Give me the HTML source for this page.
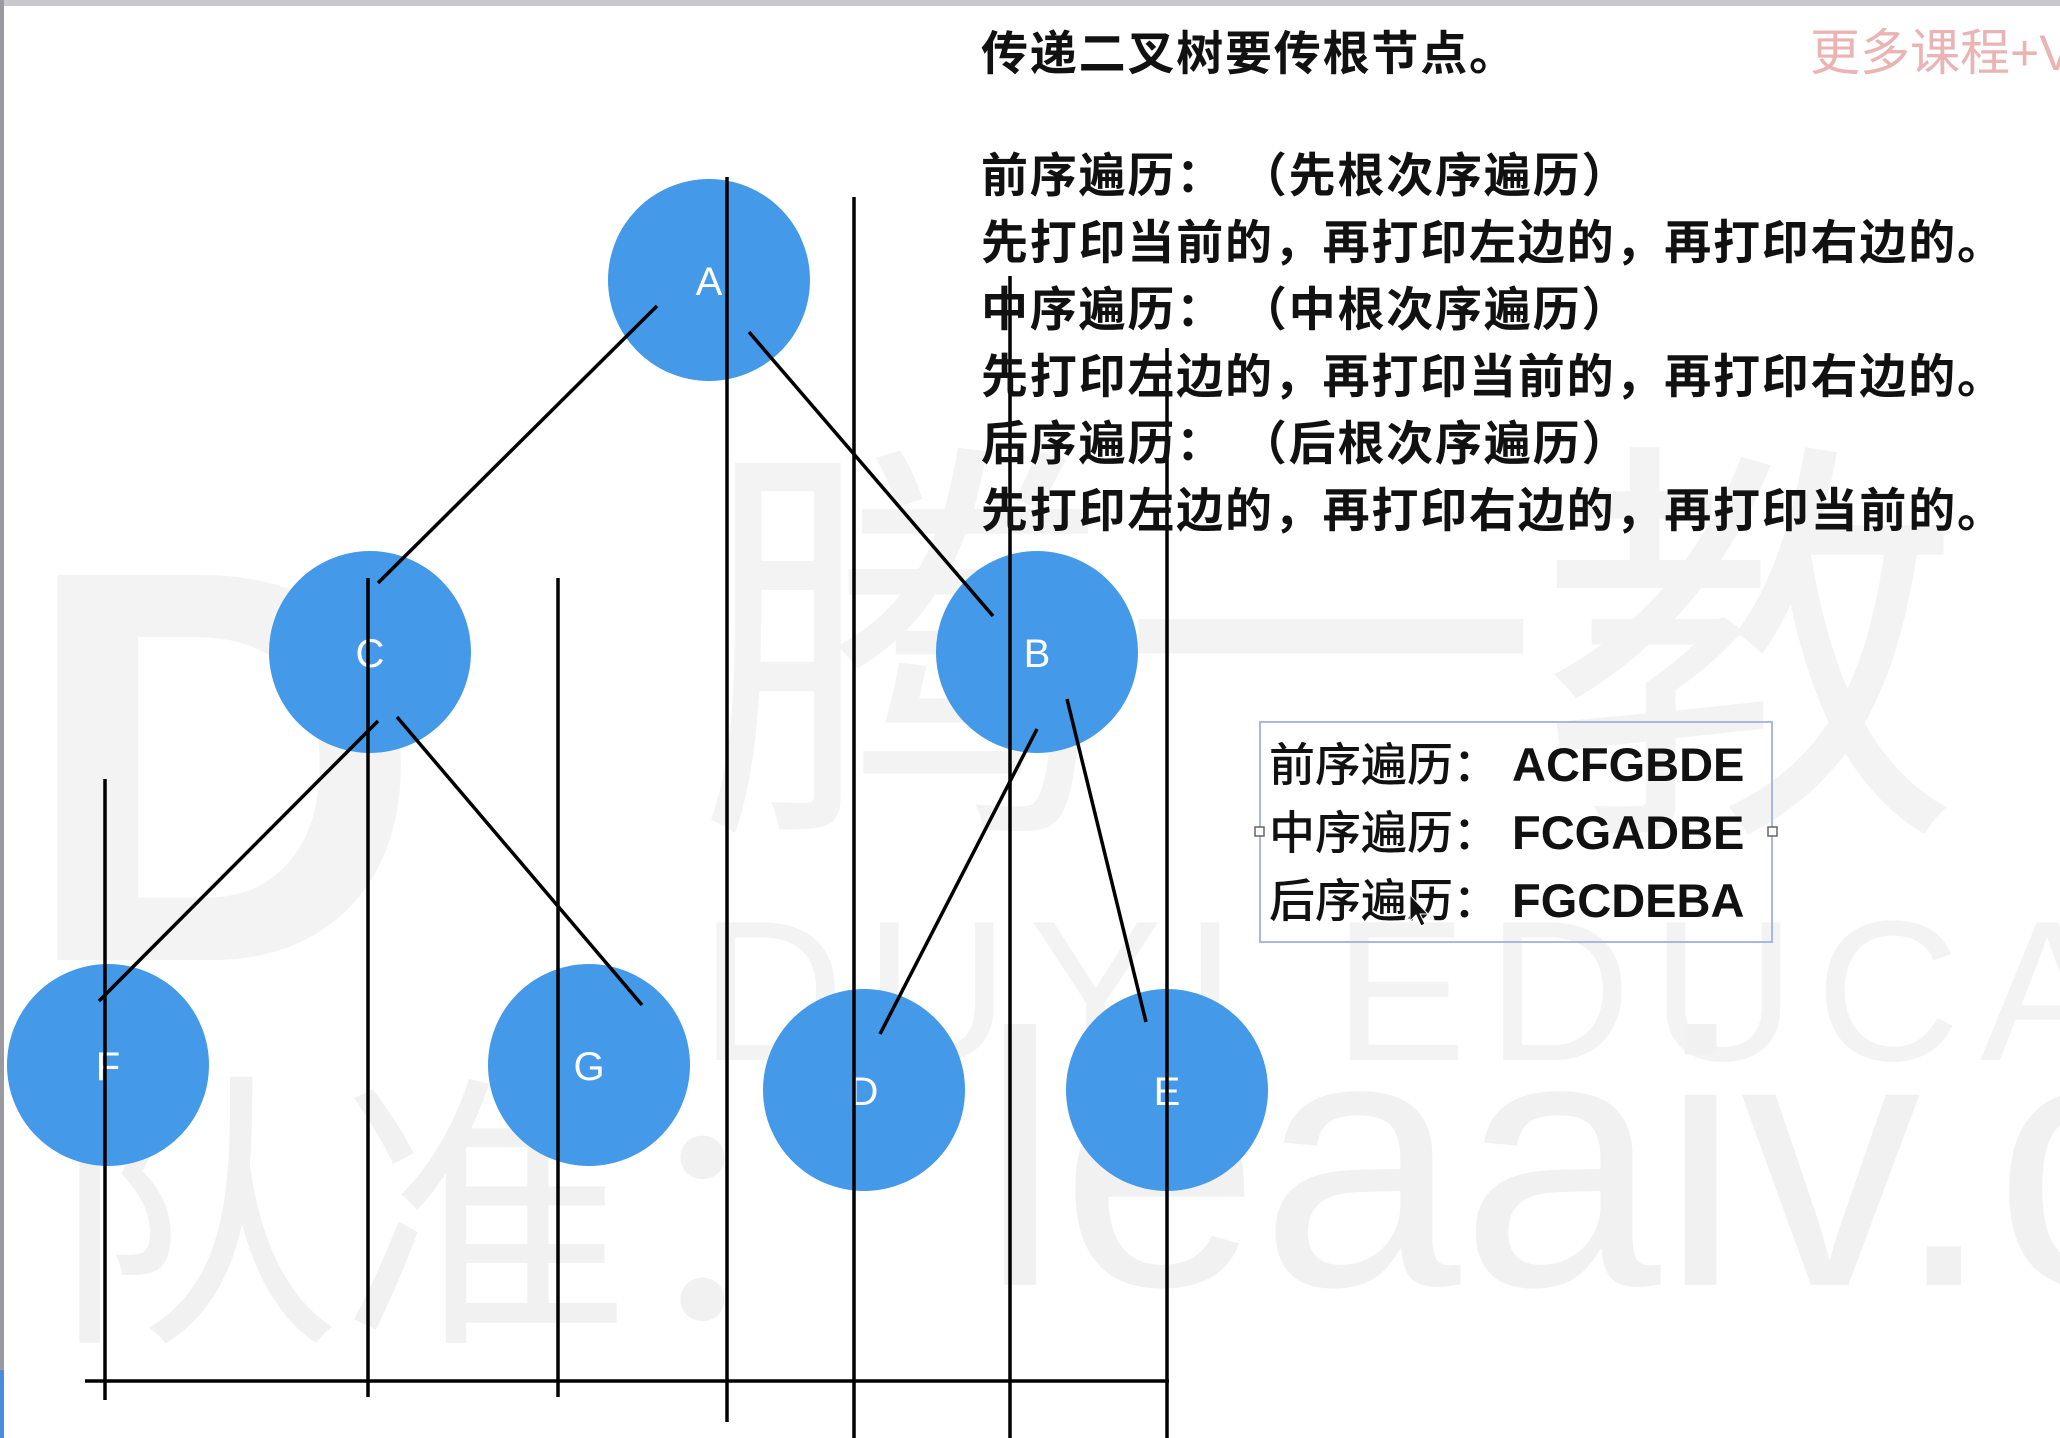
<!DOCTYPE html>
<html><head><meta charset="utf-8"><style>
html,body{margin:0;padding:0;background:#fff;width:2060px;height:1438px;overflow:hidden}
svg{position:absolute;left:0;top:0}
</style></head><body>
<svg width="2060" height="1438" viewBox="0 0 2060 1438" xmlns="http://www.w3.org/2000/svg">
<rect x="0" y="0" width="2060" height="6" fill="#c9c9cd"/>
<rect x="0" y="0" width="4" height="1438" fill="#9a9aa0"/>
<rect x="0" y="1370" width="4" height="68" fill="#4a8be0"/>
<!-- watermark -->
<g font-family="Liberation Sans, 'Noto Sans CJK SC', sans-serif">
<text x="20" y="960" font-size="560" font-weight="bold" fill="#f3f3f3">D</text>
<text x="700" y="800" font-size="420" font-family="'Noto Sans CJK SC',sans-serif" fill="#f3f3f3">腾一教</text>
<text x="700" y="1060" font-size="200" fill="#f3f3f3" letter-spacing="20">DUYI EDUCAT</text>
<text x="50" y="1320" font-size="290" font-family="'Noto Sans CJK SC',sans-serif" fill="#f1f1f1">队准：</text>
<text x="980" y="1285" font-size="360" fill="#f1f1f1">leaaiv.c</text>
</g>
<!-- circles -->
<g fill="#4499e8">
<circle cx="709" cy="280" r="101"/>
<circle cx="370" cy="652" r="101"/>
<circle cx="1037" cy="652" r="101"/>
<circle cx="108" cy="1065" r="101"/>
<circle cx="589" cy="1065" r="101"/>
<circle cx="864" cy="1090" r="101"/>
<circle cx="1167" cy="1090" r="101"/>
</g>
<g fill="#fff" font-family="Liberation Sans, sans-serif" font-size="40" text-anchor="middle">
<text x="709" y="295">A</text>
<text x="370" y="667">C</text>
<text x="1037" y="667">B</text>
<text x="108" y="1080">F</text>
<text x="589" y="1080">G</text>
<text x="864" y="1105">D</text>
<text x="1167" y="1105">E</text>
</g>
<g stroke="#000" stroke-width="3.5" fill="none">
<line x1="657" y1="306" x2="378" y2="583"/>
<line x1="749" y1="332" x2="993" y2="616"/>
<line x1="378" y1="721" x2="99" y2="1001"/>
<line x1="397" y1="717" x2="642" y2="1005"/>
<line x1="1037" y1="729" x2="880" y2="1034"/>
<line x1="1067" y1="699" x2="1146" y2="1022"/>
<line x1="105" y1="779" x2="105" y2="1400"/>
<line x1="368" y1="578" x2="368" y2="1397"/>
<line x1="558" y1="578" x2="558" y2="1397"/>
<line x1="727" y1="177" x2="727" y2="1422"/>
<line x1="854" y1="197" x2="854" y2="1438"/>
<line x1="1010" y1="276" x2="1010" y2="1438"/>
<line x1="1167" y1="348" x2="1167" y2="1438"/>
<line x1="85" y1="1381" x2="1169" y2="1381"/>
</g>
<g font-family="'Liberation Sans','Noto Sans CJK SC',sans-serif" font-size="47" font-weight="600" fill="#111" letter-spacing="1.8">
<text x="981" y="70">传递二叉树要传根节点。</text>
<text x="981" y="192">前序遍历：&#160;（先根次序遍历）</text>
<text x="981" y="259">先打印当前的，再打印左边的，再打印右边的。</text>
<text x="981" y="326">中序遍历：&#160;（中根次序遍历）</text>
<text x="981" y="393">先打印左边的，再打印当前的，再打印右边的。</text>
<text x="981" y="460">后序遍历：&#160;（后根次序遍历）</text>
<text x="981" y="527">先打印左边的，再打印右边的，再打印当前的。</text>
</g>
<text x="1810" y="70" font-family="'Liberation Sans','Noto Sans CJK SC',sans-serif" font-size="50" fill="#eab4b4">更多课程+V</text>
<rect x="1260" y="722" width="512" height="220" fill="none" stroke="#aab8e0" stroke-width="2"/>
<rect x="1255" y="827" width="9" height="9" fill="#fff" stroke="#666" stroke-width="1.5"/>
<rect x="1768" y="827" width="9" height="9" fill="#fff" stroke="#666" stroke-width="1.5"/>
<g font-family="'Liberation Sans','Noto Sans CJK SC',sans-serif" font-size="46" font-weight="500" fill="#111">
<text x="1269" y="781">前序遍历：<tspan x="1512" font-weight="bold" font-size="47">ACFGBDE</tspan></text>
<text x="1269" y="849">中序遍历：<tspan x="1512" font-weight="bold" font-size="47">FCGADBE</tspan></text>
<text x="1269" y="917">后序遍历：<tspan x="1512" font-weight="bold" font-size="47">FGCDEBA</tspan></text>
</g>
<path d="M1410 895 l0 26 l6 -6 l5 11 l4 -2 l-5 -10 l8 0 z" fill="#111" stroke="#fff" stroke-width="1"/>
</svg>
</body></html>
